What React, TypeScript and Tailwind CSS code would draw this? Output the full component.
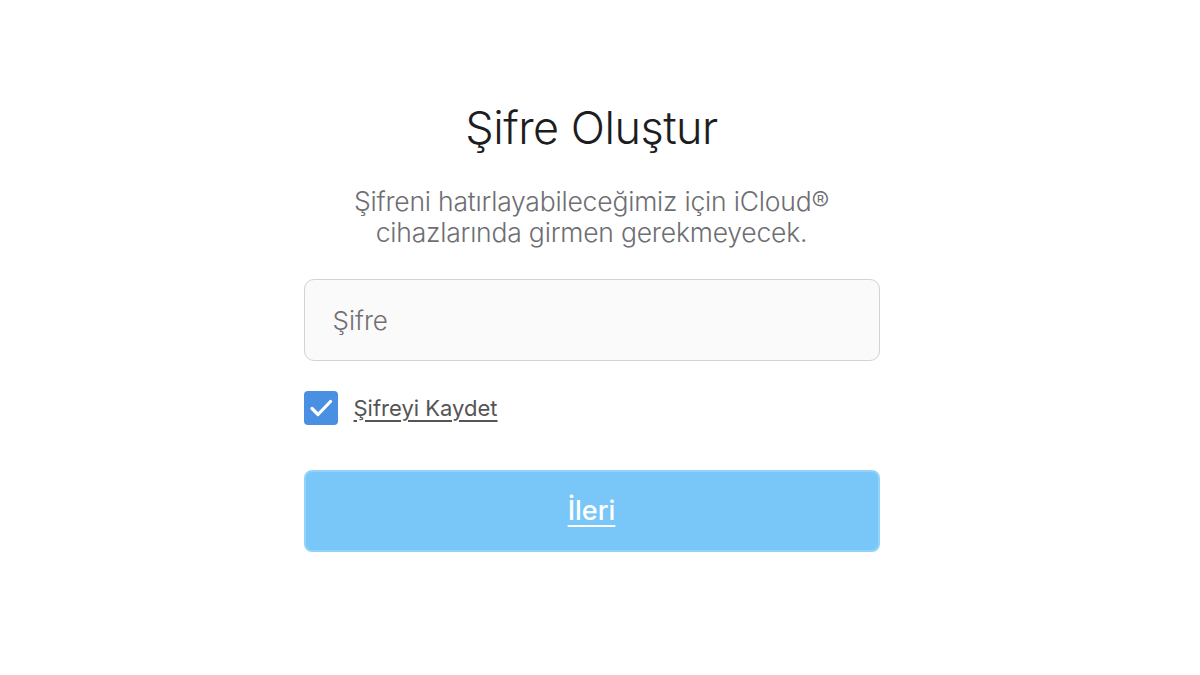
export default function App() {
  return (
    <div
      className="w-[1200px] h-[675px] bg-white flex flex-col items-center pr-[17px]"
      style={{ fontFamily: 'Inter, "Noto Sans", sans-serif' }}
    >
      <h1 className="mt-[100px] text-[45px] leading-[56px] font-light text-[#1d1d1f] tracking-[-0.5px]">
        Şifre Oluştur
      </h1>
      <p className="mt-[30px] text-[26.5px] leading-[31px] text-[#6e6e73] text-center font-light tracking-[-0.2px]">
        Şifreni hatırlayabileceğimiz için iCloud®
        <br />
        cihazlarında girmen gerekmeyecek.
      </p>
      <div className="mt-[31px] w-[576px] h-[82px] rounded-[10px] border border-[#d2d2d7] bg-[#fafafa] flex items-center px-[28px]">
        <span className="text-[26px] text-[#707073] font-light">Şifre</span>
      </div>
      <div className="mt-[30px] w-[576px] flex items-center gap-[16px]">
        <div className="w-[34px] h-[34px] rounded-[4px] bg-[#4a90e2] flex items-center justify-center">
          <svg width="26" height="26" viewBox="0 0 26 26" fill="none">
            <path d="M4 13.5l6 6L22.5 6.5" stroke="white" strokeWidth="3.2" strokeLinecap="round" strokeLinejoin="round" />
          </svg>
        </div>
        <span className="text-[22px] text-[#555] underline underline-offset-[4px] decoration-[1.5px]">
          Şifreyi Kaydet
        </span>
      </div>
      <button className="mt-[45px] w-[576px] h-[82px] rounded-[8px] bg-[#79c7f8] border-[2px] border-[#92d3fa] flex items-center justify-center">
        <span className="text-[27px] font-medium text-white underline underline-offset-[5px] decoration-[2px]">
          İleri
        </span>
      </button>
    </div>
  );
}
